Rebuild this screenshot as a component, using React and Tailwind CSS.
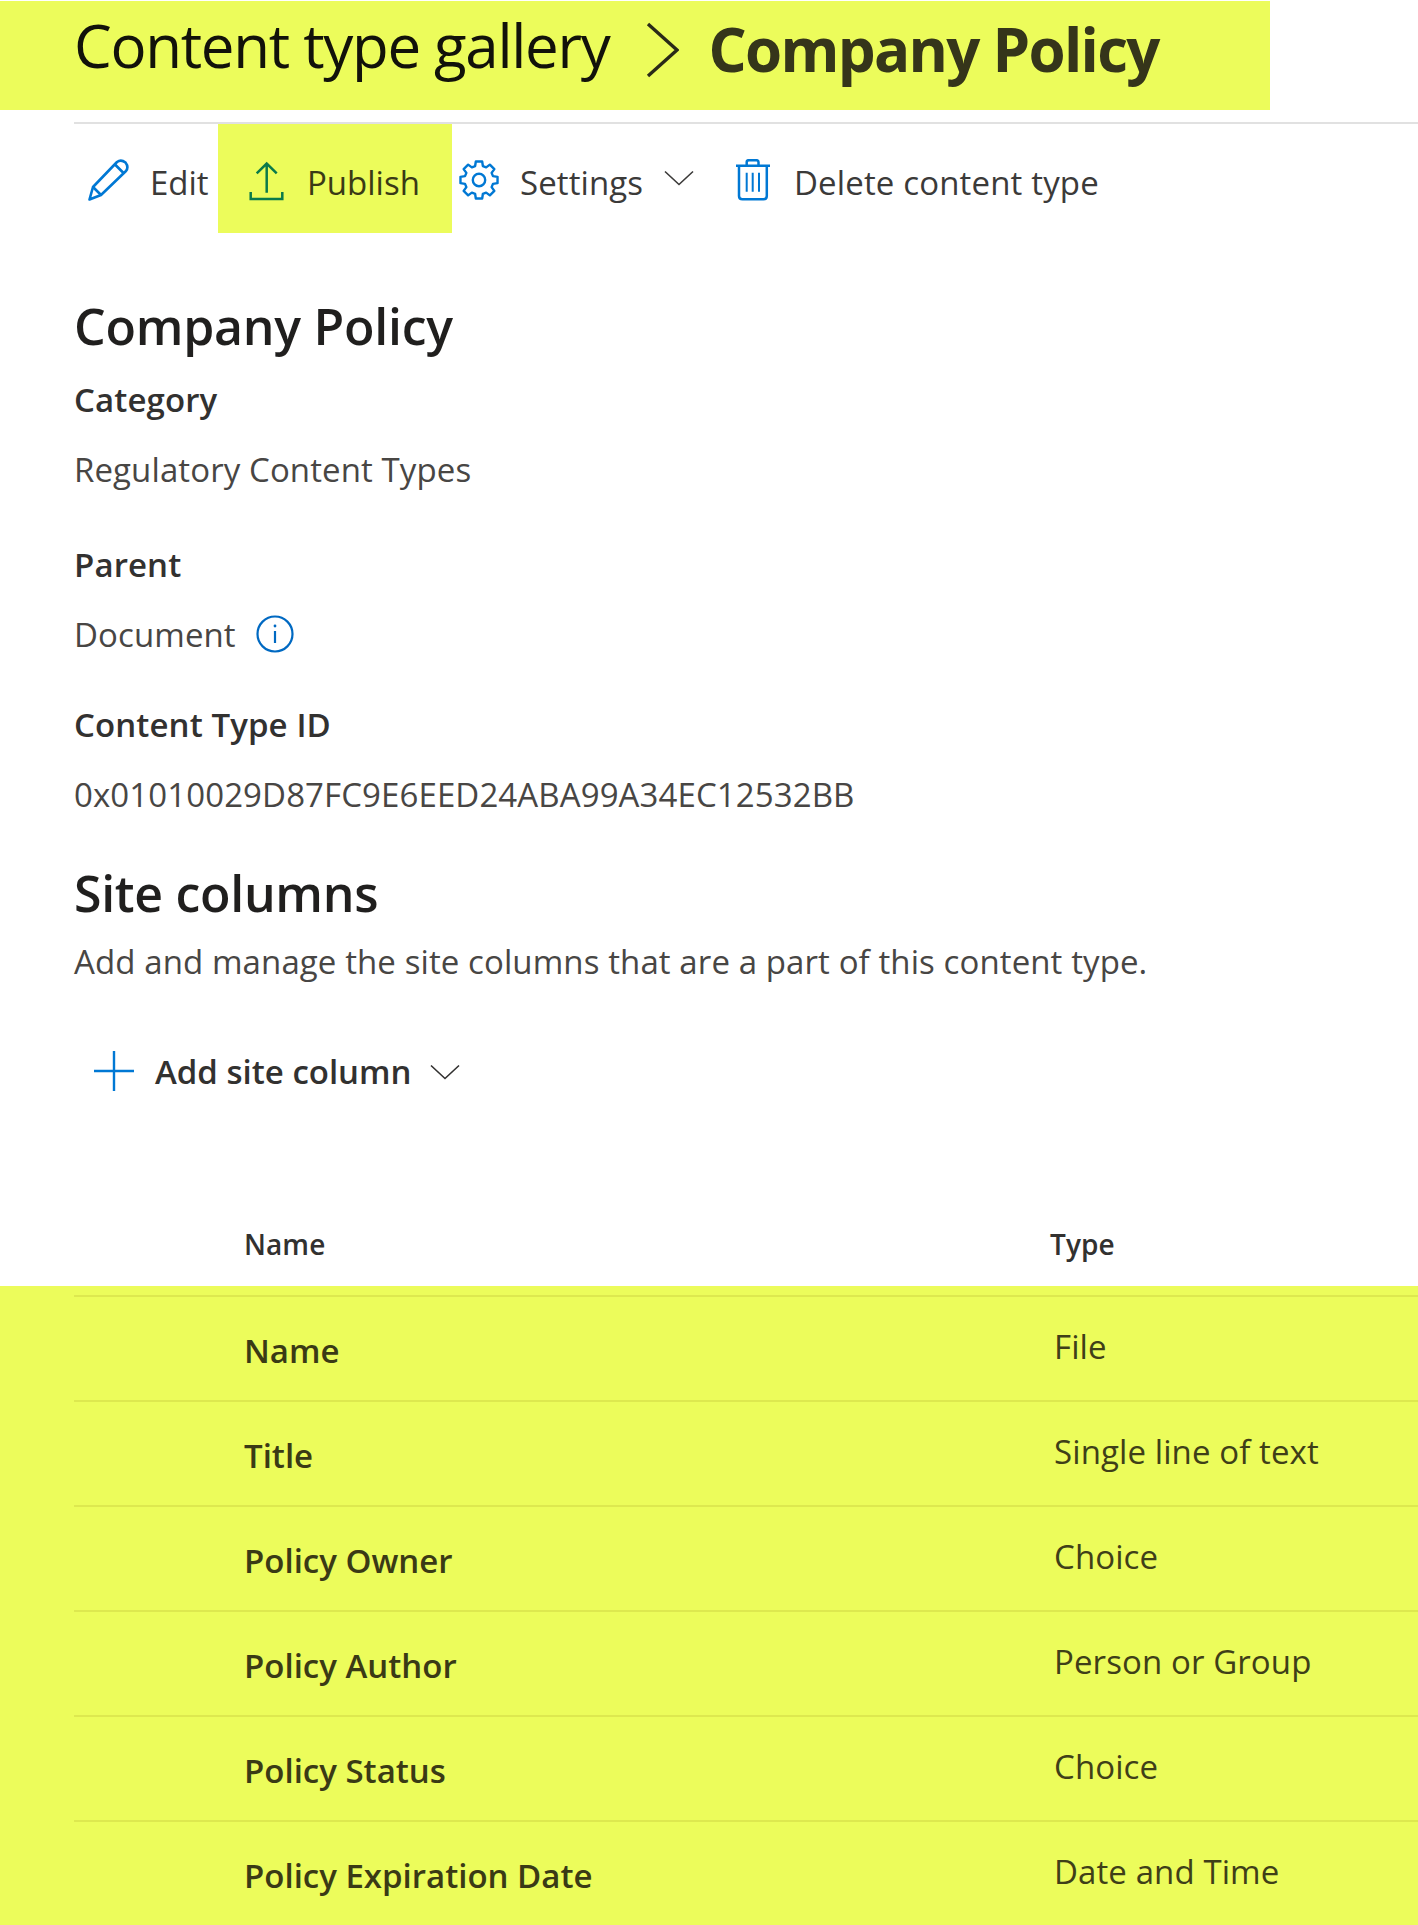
const rows = [
	["Name", "File"],
	["Title", "Single line of text"],
	["Policy Owner", "Choice"],
	["Policy Author", "Person or Group"],
	["Policy Status", "Choice"],
	["Policy Expiration Date", "Date and Time"],
];

// eight tooth outline for the settings gear
function gearPath() {
	var d = "";
	for (var k = 0; k < 8; k++) {
		var a = (k * Math.PI) / 4;
		[
			[-0.27, 14.5],
			[-0.17, 18.8],
			[0.17, 18.8],
			[0.27, 14.5],
		].forEach((p) => {
			var x = 20 + p[1] * Math.sin(a + p[0]);
			var y = 20 - p[1] * Math.cos(a + p[0]);
			d += (d === "" ? "M" : "L") + x.toFixed(2) + " " + y.toFixed(2) + " ";
		});
	}
	return d + "Z";
}

function Chevron(props) {
	return (
		<svg viewBox="0 0 30 16" className={props.className} fill="none" stroke="currentColor" strokeWidth="1.6">
			<path d="M1 1.5 L15 14.5 L29 1.5" />
		</svg>
	);
}

function PencilIcon() {
	return (
		<svg viewBox="8 7 42 46" className="w-[42px] h-[46px] mt-[3px]" fill="none" stroke="#0078d4" strokeWidth="2.6" strokeLinejoin="round">
			<path d="M9.5 49.5 L13 37 L37 12 Q41 9 45.5 12.5 Q49 17 46 21 L21 45 Z" />
			<path d="M13 37 L21 45 M35 14.5 L44 23.5" />
		</svg>
	);
}

function UploadIcon() {
	return (
		<svg viewBox="14 11 35 40" className="w-[35px] h-[40px] mt-[5px]" fill="none" stroke="#0a7a4a" strokeWidth="2.5">
			<path d="M31.7 42.7 V13.5 M21.7 23.3 L31.7 13.5 L41.7 23.3" />
			<path d="M15.7 42 V49 H47.3 V42" />
		</svg>
	);
}

function GearIcon() {
	return (
		<svg viewBox="0 0 40 40" className="w-[40px] h-[40px] mt-[3px]" fill="none" stroke="#0078d4" strokeWidth="2.4" strokeLinejoin="round">
			<path d={gearPath()} />
			<circle cx="20" cy="20" r="6.2" />
		</svg>
	);
}

function TrashIcon() {
	return (
		<svg viewBox="11 9 34 42" className="w-[34px] h-[42px] mt-[3px]" fill="none" stroke="#0078d4" strokeWidth="2.5">
			<path d="M11 15.7 H45" />
			<path d="M21.7 15 V12 Q21.7 10.2 24 10.2 H31.5 Q33.5 10.2 33.5 12 V15" />
			<path d="M14 16 V46 Q14 49.3 17.5 49.3 H38.5 Q41.8 49.3 41.8 46 V16" />
			<path d="M21.7 22.7 V41.7 M27.7 22.7 V41.7 M34 22.7 V41.7" strokeWidth="2" />
		</svg>
	);
}

function InfoIcon() {
	return (
		<svg viewBox="0 0 38 38" className="w-[38px] h-[38px] -mt-[2px]" fill="none" stroke="#0069c2" strokeWidth="2.2">
			<circle cx="19" cy="19" r="17.5" />
			<path d="M19 16 V28" />
			<circle cx="19" cy="11" r="1.4" fill="#0069c2" stroke="none" />
		</svg>
	);
}

function PlusIcon() {
	return (
		<svg viewBox="0 0 40 40" className="w-[40px] h-[40px] -mt-[2px]" fill="none" stroke="#0078d4" strokeWidth="2.4">
			<path d="M20 0 V40 M0 20 H40" />
		</svg>
	);
}

function Label(props) {
	return <div className="text-[33px] leading-[40px] font-semibold text-[#323130] tracking-[0.1px]">{props.children}</div>;
}

function Value(props) {
	return <div className="text-[33px] leading-[40px] text-[#484644] tracking-[0.1px]">{props.children}</div>;
}

export default function App() {
	return (
		<div className="w-[1418px] h-[1925px] overflow-hidden bg-white font-['Open_Sans',sans-serif]">
			<div className="mt-px h-[109px] w-[1270px] bg-[#ecfc5b] flex items-center pl-[74px]">
				<span className="text-[60px] font-normal text-[#12120a] tracking-[-1.3px] leading-none -mt-[22px]">Content type gallery</span>
				<svg viewBox="0 0 33 56" className="w-[33px] h-[56px] ml-[37px] -mt-[12px]" fill="none" stroke="#2a2a18" strokeWidth="3.4">
					<path d="M2 2 L31 28 L2 54" />
				</svg>
				<span className="ml-[29px] text-[60px] font-bold text-[#35351a] tracking-[-1.7px] leading-none -mt-[13px]">Company Policy</span>
			</div>

			<div className="ml-[74px] mt-[12px] h-[2px] bg-[#e1e1e1]"></div>

			<div className="h-[109px] flex items-center ml-[88px] text-[33px] text-[#3b3a39]">
				<div className="flex items-center h-full w-[130px] gap-[20px]">
					<PencilIcon />
					<span className="mt-[8px]">Edit</span>
				</div>
				<div className="flex items-center h-full w-[234px] pl-[31px] gap-[23px] bg-[#ecfc5b] text-[#3a3a15]">
					<UploadIcon />
					<span className="mt-[8px]">Publish</span>
				</div>
				<div className="flex items-center h-full w-[284px] pl-[7px] gap-[21px]">
					<GearIcon />
					<span className="mt-[8px] tracking-[0.1px]">Settings</span>
					<Chevron className="w-[30px] h-[16px] -mt-[2px]" />
				</div>
				<div className="flex items-center h-full gap-[24px]">
					<TrashIcon />
					<span className="mt-[8px] tracking-[0.15px]">Delete content type</span>
				</div>
			</div>

			<div className="ml-[74px]">
				<h2 className="mt-[61px] text-[50px] leading-[64px] font-semibold text-[#201f1e] tracking-[-0.25px]">Company Policy</h2>
				<div className="mt-[22px]"><Label>Category</Label></div>
				<div className="mt-[30px]"><Value>Regulatory Content Types</Value></div>
				<div className="mt-[55px]"><Label>Parent</Label></div>
				<div className="mt-[30px] flex items-center gap-[20px]">
					<Value>Document</Value>
					<InfoIcon />
				</div>
				<div className="mt-[50px]"><Label>Content Type ID</Label></div>
				<div className="mt-[30px]"><Value>0x01010029D87FC9E6EED24ABA99A34EC12532BB</Value></div>
				<h2 className="mt-[46px] text-[50px] leading-[64px] font-semibold text-[#201f1e] tracking-[-0.3px]">Site columns</h2>
				<div className="mt-[17px]"><Value>Add and manage the site columns that are a part of this content type.</Value></div>
				<div className="mt-[70px] ml-[20px] flex items-center">
					<PlusIcon />
					<span className="ml-[21px] text-[33px] leading-[40px] font-semibold text-[#323130]">Add site column</span>
					<Chevron className="ml-[18px] w-[30px] h-[16px] text-[#323130]" />
				</div>
			</div>

			<div className="mt-[131px] h-[63px] flex text-[28px] font-semibold text-[#323130] tracking-[0.1px]">
				<div className="w-[1050px] pl-[244px]">Name</div>
				<div>Type</div>
			</div>

			<div className="bg-[#ecfc5b] pt-[9px] h-[640px]">
				{rows.map((row) => (
					<div key={row[0]} className="ml-[74px] h-[105px] border-t-2 border-[#dde84f] flex pl-[170px]">
						<div className="w-[810px] pt-[34px] text-[33px] leading-[40px] font-semibold text-[#3a3a15]">{row[0]}</div>
						<div className="pt-[30px] text-[33px] leading-[40px] text-[#3f3f18] tracking-[0.1px]">{row[1]}</div>
					</div>
				))}
			</div>
		</div>
	);
}
